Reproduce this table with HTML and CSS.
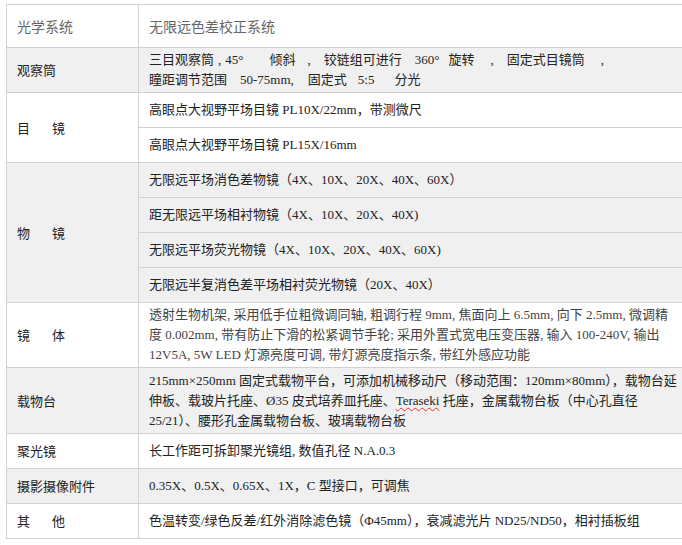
FILE: index.html
```html
<!DOCTYPE html>
<html lang="zh-CN">
<head>
<meta charset="utf-8">
<title>光学系统参数</title>
<link rel="stylesheet" href="styles.css">
</head>
<body>
<table class="spec">
  <colgroup><col class="c1"><col class="c2"></colgroup>
  <tr class="r-head">
    <td class="head">光学系统</td>
    <td class="head">无限远色差校正系统</td>
  </tr>
  <tr class="gray r-two">
    <td class="key">观察筒</td>
    <td class="val">三目观察筒<span class="g g4"></span>,<span class="g g4"></span>45°<span class="g g26"></span>倾斜<span class="g g12"></span>,<span class="g g13"></span>铰链组可进行<span class="g g13"></span>360°<span class="g g9"></span>旋转<span class="g g16"></span>,<span class="g g13"></span>固定式目镜筒<span class="g g16"></span>,<br>瞳距调节范围<span class="g g13"></span>50-75mm,<span class="g g14"></span>固定式<span class="g g11"></span>5:5<span class="g g20"></span>分光</td>
  </tr>
  <tr class="r-one">
    <td class="key" rowspan="2">目<span class="gap"></span>镜</td>
    <td class="val">高眼点大视野平场目镜 PL10X/22mm，带测微尺</td>
  </tr>
  <tr class="r-one">
    <td class="val">高眼点大视野平场目镜 PL15X/16mm</td>
  </tr>
  <tr class="gray r-one">
    <td class="key" rowspan="4">物<span class="gap"></span>镜</td>
    <td class="val">无限远平场消色差物镜（4X、10X、20X、40X、60X）</td>
  </tr>
  <tr class="gray r-one">
    <td class="val">距无限远平场相衬物镜（4X、10X、20X、40X)</td>
  </tr>
  <tr class="gray r-one">
    <td class="val">无限远平场荧光物镜（4X、10X、20X、40X、60X)</td>
  </tr>
  <tr class="gray r-one">
    <td class="val">无限远半复消色差平场相衬荧光物镜（20X、40X）</td>
  </tr>
  <tr class="r-three">
    <td class="key">镜<span class="gap"></span>体</td>
    <td class="val soft">透射生物机架,&nbsp;采用低手位粗微调同轴,&nbsp;粗调行程 9mm,&nbsp;焦面向上 6.5mm,&nbsp;向下 2.5mm,&nbsp;微调精<br>度 0.002mm,&nbsp;带有防止下滑的松紧调节手轮;&nbsp;采用外置式宽电压变压器,&nbsp;输入 100-240V,&nbsp;输出<br>12V5A,&nbsp;5W LED 灯源亮度可调,&nbsp;带灯源亮度指示条,&nbsp;带红外感应功能</td>
  </tr>
  <tr class="gray r-three2">
    <td class="key">载物台</td>
    <td class="val">215mm×250mm 固定式载物平台，可添加机械移动尺（移动范围：120mm×80mm），载物台延<br>伸板、载玻片托座、Ø35 皮式培养皿托座、<span class="spell">Teraseki</span> 托座，金属载物台板（中心孔直径<br>25/21）、腰形孔金属载物台板、玻璃载物台板</td>
  </tr>
  <tr class="r-one">
    <td class="key">聚光镜</td>
    <td class="val">长工作距可拆卸聚光镜组,&nbsp;数值孔径 N.A.0.3</td>
  </tr>
  <tr class="gray r-one">
    <td class="key">摄影摄像附件</td>
    <td class="val">0.35X、0.5X、0.65X、1X，C 型接口，可调焦</td>
  </tr>
  <tr class="r-one">
    <td class="key">其<span class="gap"></span>他</td>
    <td class="val">色温转变/绿色反差/红外消除滤色镜（Φ45mm），衰减滤光片 ND25/ND50，相衬插板组</td>
  </tr>
</table>
</body>
</html>
```

FILE: styles.css
```css
html, body {
  margin: 0;
  padding: 0;
  background: #ffffff;
  overflow: hidden;
}

body {
  padding: 4px 0 0 6px;
  font-family: "Liberation Serif", "Noto Sans CJK SC", serif;
  font-size: 13px;
  color: #222222;
}

.spec {
  border-collapse: collapse;
  table-layout: fixed;
  width: 700px;
}

.c1 { width: 132px; }
.c2 { width: 568px; }

.spec td {
  border: 1px solid #d2d2d2;
  padding: 2px 10px;
  line-height: 20px;
  vertical-align: middle;
  white-space: nowrap;
}

.gray td { background: #f0f0f0; }

.r-head td { height: 38px; }
.r-two td { height: 39px; }
.r-one td { height: 30px; }
.r-three td { height: 60px; }
.r-three2 td { height: 61px; }

.head {
  font-family: "Noto Sans CJK SC", sans-serif;
  font-size: 14px;
  color: #666666;
}

.key {
  font-family: "Noto Sans CJK SC", sans-serif;
  color: #222222;
}

.gap {
  display: inline-block;
  width: 22px;
}

.g { display: inline-block; }
.g4 { width: 4px; }
.g9 { width: 9px; }
.g11 { width: 11px; }
.g12 { width: 12px; }
.g13 { width: 13px; }
.g14 { width: 14px; }
.g16 { width: 16px; }
.g20 { width: 20px; }
.g26 { width: 26px; }

.soft { color: #444444; }

.spell {
  text-decoration: underline wavy #e03030;
  text-decoration-thickness: 1px;
  text-underline-offset: 2px;
}
```
